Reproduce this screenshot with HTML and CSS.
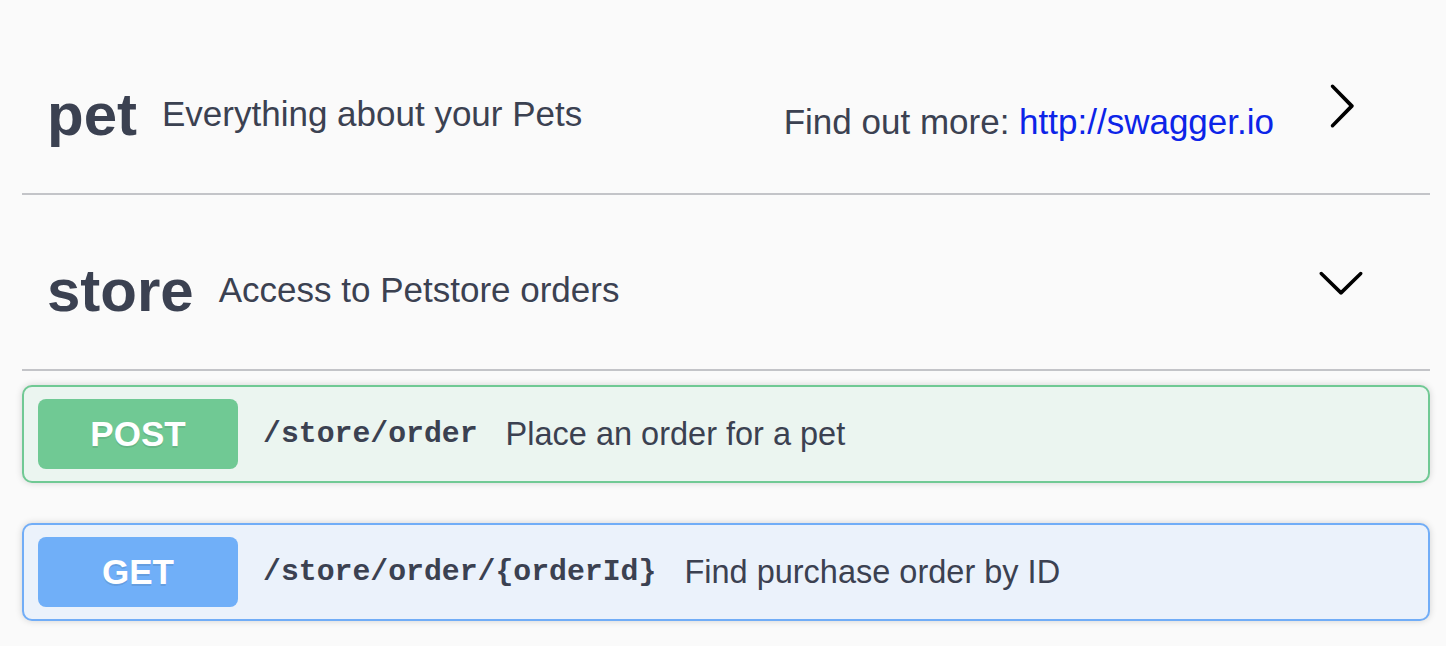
FILE: index.html
```html
<!DOCTYPE html>
<html lang="en">
<head>
  <meta charset="UTF-8">
  <title>Swagger Petstore</title>
  <link rel="stylesheet" href="styles.css">
</head>
<body>
  <div class="wrapper">
    <section class="tag-section">
      <h3 class="tag">
        <span class="tag-name">pet</span>
        <small class="tag-desc">Everything about your Pets</small>
        <div class="tag-more">Find out more: <a href="http://swagger.io">http://swagger.io</a></div>
        <button class="expand collapsed" title="Expand operation">
          <svg class="arrow" width="50" height="50" viewBox="0 0 20 20">
            <path d="M17.418 6.109c.272-.268.709-.268.979 0s.271.701 0 .969l-7.908 7.83c-.27.268-.707.268-.979 0l-7.908-7.83c-.27-.268-.27-.701 0-.969.271-.268.709-.268.979 0L10 13.25l7.418-7.141z"/>
          </svg>
        </button>
      </h3>
    </section>

    <section class="tag-section">
      <h3 class="tag">
        <span class="tag-name">store</span>
        <small class="tag-desc">Access to Petstore orders</small>
        <button class="expand" title="Collapse operation">
          <svg class="arrow" width="50" height="50" viewBox="0 0 20 20">
            <path d="M17.418 6.109c.272-.268.709-.268.979 0s.271.701 0 .969l-7.908 7.83c-.27.268-.707.268-.979 0l-7.908-7.83c-.27-.268-.27-.701 0-.969.271-.268.709-.268.979 0L10 13.25l7.418-7.141z"/>
          </svg>
        </button>
      </h3>

      <div class="ops">
        <div class="op op-post">
          <span class="op-method">POST</span>
          <span class="op-path">/store/order</span>
          <span class="op-desc">Place an order for a pet</span>
        </div>
        <div class="op op-get">
          <span class="op-method">GET</span>
          <span class="op-path">/store/order/{orderId}</span>
          <span class="op-desc">Find purchase order by ID</span>
        </div>
      </div>
    </section>
  </div>
</body>
</html>
```

FILE: styles.css
```css
body {
  margin: 0;
  background: #fafafa;
  color: #3b4151;
  font-family: "Liberation Sans", Arial, sans-serif;
}
.wrapper {
  padding: 19px 16px 0 22px;
}
.tag {
  display: flex;
  align-items: center;
  height: 176px;
  box-sizing: border-box;
  margin: 0;
  padding: 18px 39px 0 25px;
  border-bottom: 2px solid #c3c4c8;
  font-weight: normal;
}
.tag-name {
  font-size: 60px;
  line-height: 70px;
  font-weight: bold;
}
.tag-desc {
  flex: 1;
  padding: 0 25px;
  margin-top: -2px;
  font-size: 35px;
  line-height: 40px;
}
.tag-more {
  margin-top: 14px;
  margin-right: 17px;
  font-size: 35px;
  line-height: 40px;
}
.tag-more a {
  color: #0c24e8;
  text-decoration: none;
}
.expand {
  display: flex;
  padding: 0 25px;
  margin-bottom: 18px;
  border: none;
  background: none;
  cursor: pointer;
}
.arrow {
  fill: #000;
}
.expand.collapsed .arrow {
  transform: rotate(-90deg);
}
.ops {
  padding-top: 14px;
}
.op {
  display: flex;
  align-items: center;
  margin-bottom: 40px;
  padding: 12px 14px;
  border: 2px solid;
  border-radius: 10px;
  box-shadow: 0 0 7px rgba(0,0,0,0.16);
}
.op-post {
  background: #ebf5f0;
  border-color: #70c994;
}
.op-get {
  background: #ebf2fb;
  border-color: #71adf7;
}
.op-method {
  width: 200px;
  height: 70px;
  line-height: 70px;
  border-radius: 8px;
  color: #fff;
  font-size: 35px;
  font-weight: bold;
  text-align: center;
  text-shadow: 0 2px 0 rgba(0,0,0,0.1);
}
.op-post .op-method {
  background: #70c994;
}
.op-get .op-method {
  background: #70aff8;
}
.op-path {
  padding: 0 28px 0 25px;
  font-family: "Liberation Mono", "Courier New", monospace;
  font-size: 29.8px;
  font-weight: bold;
}
.op-desc {
  font-size: 32.5px;
}
```
